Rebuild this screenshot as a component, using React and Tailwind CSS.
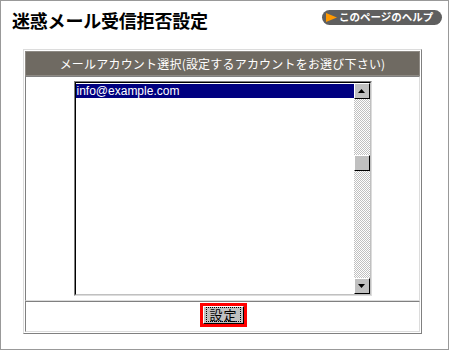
const jp = "font-['Noto_Sans_CJK_JP',sans-serif]";

const ScrollButton = ({ down }) => (
  <div className="w-[16px] h-[16px] bg-[#c0c0c0] border border-t-white border-l-white border-r-black border-b-black flex items-center justify-center">
    <svg width="7" height="4" viewBox="0 0 7 4">
      {down ? (
        <polygon points="0,0 7,0 3.5,4" fill="#000" />
      ) : (
        <polygon points="3.5,0 7,4 0,4" fill="#000" />
      )}
    </svg>
  </div>
);

const AccountList = () => {
  const accounts = ["info@example.com"];
  return (
    <div className="w-[298px] h-[215px] border border-t-[#808080] border-l-[#808080] border-r-[#dcdcdc] border-b-[#dcdcdc]">
      <div className="w-full h-full border border-t-black border-l-black border-r-[#c0c0c0] border-b-[#c0c0c0] flex bg-white">
        <div className="flex-1 pt-[1px]">
          {accounts.map((a) => (
            <div
              key={a}
              className="h-[14px] bg-[#000080] text-white text-[12px] leading-[14px] pl-[1px] font-['Liberation_Sans',sans-serif]"
            >
              {a}
            </div>
          ))}
        </div>
        <div className="w-[16px] flex flex-col bg-[repeating-conic-gradient(#c0c0c0_0_25%,#ffffff_0_50%)] bg-[length:2px_2px]">
          <ScrollButton />
          <div className="h-[56px]" />
          <div className="w-[16px] h-[16px] bg-[#c0c0c0] border border-t-white border-l-white border-r-black border-b-black" />
          <div className="flex-1" />
          <ScrollButton down />
        </div>
      </div>
    </div>
  );
};

export default function App() {
  return (
    <div className={`w-[449px] h-[350px] border border-[#999999] bg-white ${jp}`}>
      <div className="flex items-start justify-between pl-[11px] pr-[6px] pt-[7px]">
        <h1 className="text-[18px] font-bold leading-[24px] text-black tracking-[-0.2px]">
          迷惑メール受信拒否設定
        </h1>
        <div className="mt-[2px] h-[15px] w-[120px] rounded-full bg-[#5f5f5f] flex items-center pl-[4px] gap-[2px]">
          <svg width="11" height="9" viewBox="0 0 11 9">
            <polygon points="0,0 11,4.5 0,9" fill="#ff9900" />
          </svg>
          <span className="text-white text-[10.5px] font-bold leading-none">
            このページのヘルプ
          </span>
        </div>
      </div>

      <div className="ml-[22px] mt-[17px] w-[399px] border border-t-[#dcdcdc] border-l-[#dcdcdc] border-r-[#808080] border-b-[#808080] p-[1px]">
        <div className="h-[25px] bg-[#6f6a62] border border-[#8e8a84] flex items-center justify-center text-white text-[12px] tracking-[0.2px]">
          メールアカウント選択(設定するアカウントをお選び下さい)
        </div>
        <div className="h-[225px] border border-t-[#808080] border-l-[#808080] border-r-[#dcdcdc] border-b-[#dcdcdc] flex justify-center items-start pt-[4px]">
          <AccountList />
        </div>
        <div className="h-[31px] border border-t-[#808080] border-l-[#808080] border-r-[#dcdcdc] border-b-[#dcdcdc] flex justify-center items-center">
          <div className="border-[3px] border-[#ff0000] mt-[-4px] ml-[2px]">
            <button className="w-[41px] h-[18px] bg-[#c0c0c0] border border-t-white border-l-white border-r-black border-b-black flex items-center justify-center p-0">
              <span className="border border-dotted border-black px-[2px] text-[13px] leading-[13px] text-black tracking-[1px]">
                設定
              </span>
            </button>
          </div>
        </div>
      </div>
    </div>
  );
}
